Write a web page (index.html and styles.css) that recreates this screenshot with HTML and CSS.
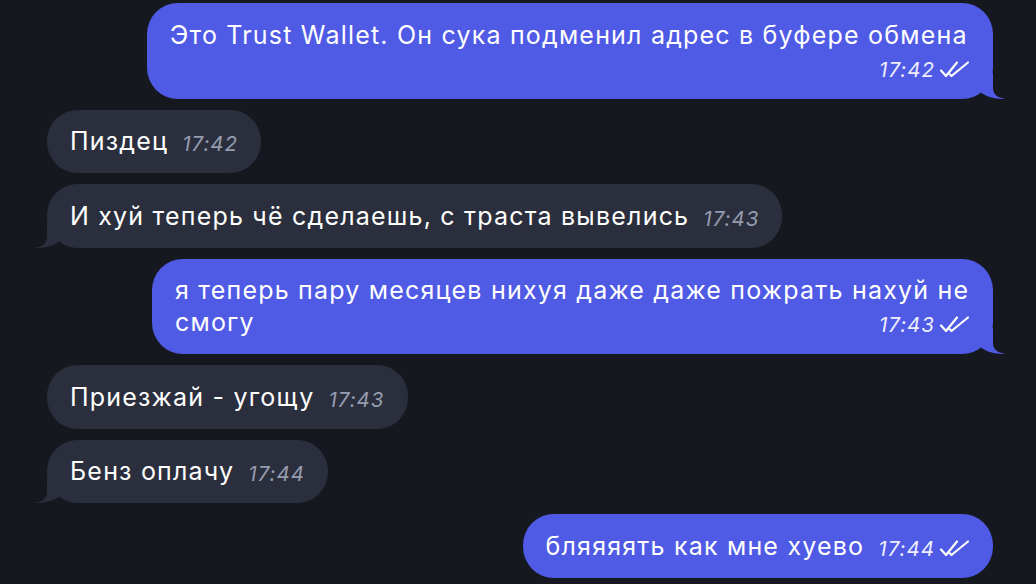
FILE: index.html
```html
<!DOCTYPE html>
<html lang="ru">
<head>
<meta charset="utf-8">
<link rel="stylesheet" href="styles.css">
</head>
<body>
<div class="chat">
  <div class="row row-out">
    <div class="bubble bubble-out">Это Trust Wallet. Он сука подменил адрес в буфере обмена<span class="meta"><span class="time">17:42</span><svg class="checks" viewBox="0 0 32 20"><path d="M2 10.5 L7 16 L18 2.5 M11 14.5 L12.5 16 L29 2.5"/></svg></span><svg class="tail" viewBox="0 0 26 26"><path d="M14 0 L14 15 C14 21 18 24.5 26 26 C19 26.3 8 24.5 2 19.5 L2 0 Z"/></svg></div>
  </div>
  <div class="row row-in">
    <div class="bubble bubble-in">Пиздец<span class="meta"><span class="time">17:42</span></span></div>
  </div>
  <div class="row row-in">
    <div class="bubble bubble-in">И хуй теперь чё сделаешь, с траста вывелись<span class="meta"><span class="time">17:43</span></span><svg class="tail" viewBox="0 0 26 26"><path d="M14 0 L14 15 C14 21 18 24.5 26 26 C19 26.3 8 24.5 2 19.5 L2 0 Z"/></svg></div>
  </div>
  <div class="row row-out">
    <div class="bubble bubble-out bubble-wrapped">я теперь пару месяцев нихуя даже даже пожрать нахуй не смогу<span class="meta"><span class="time">17:43</span><svg class="checks" viewBox="0 0 32 20"><path d="M2 10.5 L7 16 L18 2.5 M11 14.5 L12.5 16 L29 2.5"/></svg></span><svg class="tail" viewBox="0 0 26 26"><path d="M14 0 L14 15 C14 21 18 24.5 26 26 C19 26.3 8 24.5 2 19.5 L2 0 Z"/></svg></div>
  </div>
  <div class="row row-in">
    <div class="bubble bubble-in">Приезжай - угощу<span class="meta"><span class="time">17:43</span></span></div>
  </div>
  <div class="row row-in">
    <div class="bubble bubble-in">Бенз оплачу<span class="meta"><span class="time">17:44</span></span><svg class="tail" viewBox="0 0 26 26"><path d="M14 0 L14 15 C14 21 18 24.5 26 26 C19 26.3 8 24.5 2 19.5 L2 0 Z"/></svg></div>
  </div>
  <div class="row row-out">
    <div class="bubble bubble-out">бляяяять как мне хуево<span class="meta"><span class="time">17:44</span><svg class="checks" viewBox="0 0 32 20"><path d="M2 10.5 L7 16 L18 2.5 M11 14.5 L12.5 16 L29 2.5"/></svg></span></div>
  </div>
</div>
</body>
</html>
```

FILE: styles.css
```css
html, body {
  margin: 0;
  padding: 0;
  background: #16181f;
}

body {
  width: 1036px;
  height: 584px;
  overflow: hidden;
  font-family: Inter, "Noto Sans", "DejaVu Sans", sans-serif;
  -webkit-font-smoothing: antialiased;
}

.chat {
  display: flex;
  flex-direction: column;
  gap: 11px;
  padding-top: 3px;
}

.row {
  display: flex;
}

.row-out {
  justify-content: flex-end;
  padding-right: 43px;
}

.row-in {
  justify-content: flex-start;
  padding-left: 47px;
}

.bubble {
  position: relative;
  box-sizing: border-box;
  max-width: 846px;
  padding: 15.75px 23px;
  border-radius: 31px;
  font-size: 25px;
  line-height: 32px;
  color: #ffffff;
  letter-spacing: 1.2px;
}

.bubble-wrapped {
  max-width: 841px;
}

.bubble-out {
  background: #4f5ae5;
}

.bubble-in {
  background: #2b2f3d;
}

.meta {
  float: right;
  display: inline-flex;
  align-items: center;
  gap: 4px;
  margin-top: 6px;
  margin-left: 14px;
  height: 26px;
  line-height: 26px;
  letter-spacing: 0;
}

.time {
  font-size: 20.5px;
  font-style: italic;
  letter-spacing: 1px;
}

.bubble-out .time {
  color: #eceefc;
}

.bubble-in .time {
  color: #959cb0;
}

.checks {
  width: 32px;
  height: 20px;
  margin-right: -1px;
  fill: none;
  stroke: #ffffff;
  stroke-width: 2.2;
  stroke-linecap: round;
  stroke-linejoin: round;
}

.tail {
  position: absolute;
  bottom: 0;
  width: 26px;
  height: 26px;
}

.bubble-out .tail {
  right: -12px;
  fill: #4f5ae5;
}

.bubble-in .tail {
  left: -12px;
  fill: #2b2f3d;
  transform: scaleX(-1);
}
```
